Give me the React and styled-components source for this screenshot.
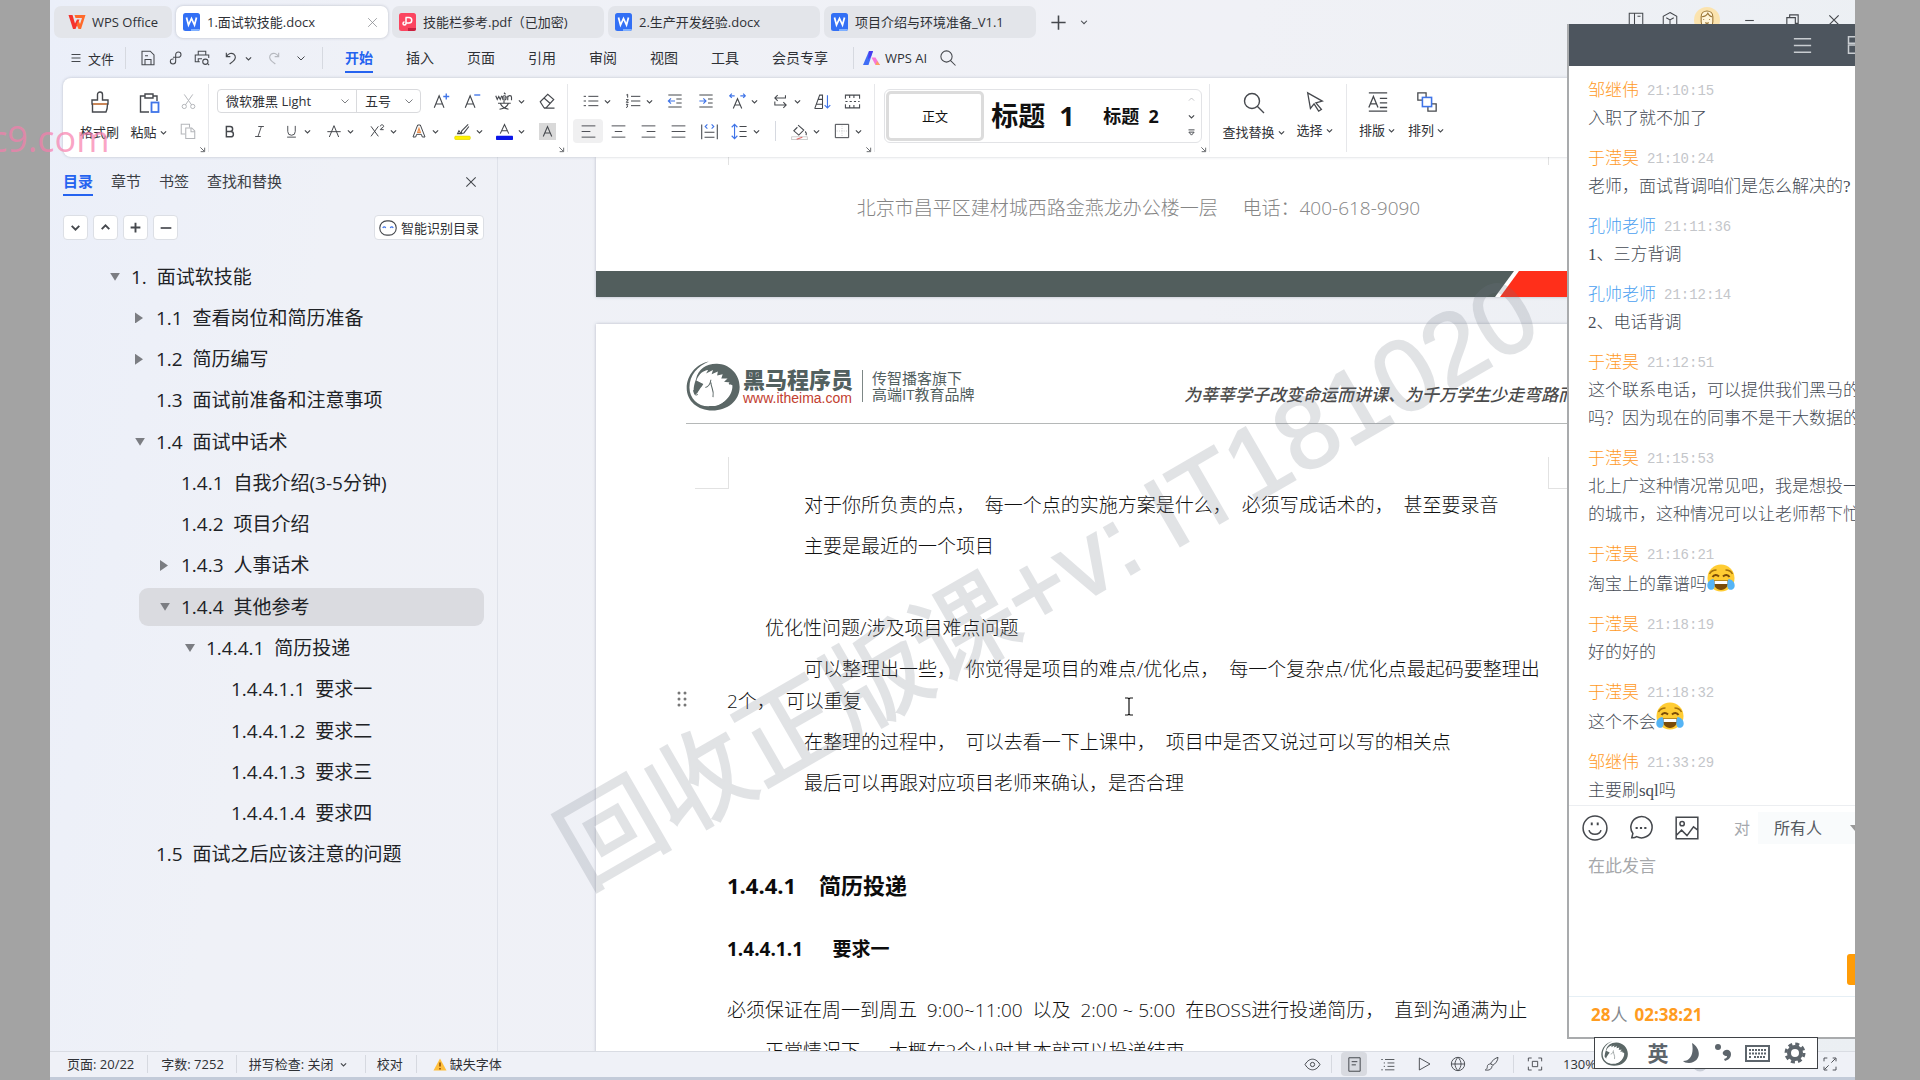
import React from "react";
import styled, { createGlobalStyle, css } from "styled-components";

const UI = '"Open Sans", "Noto Sans CJK SC", sans-serif';

const Global = createGlobalStyle`
  * { box-sizing: border-box; }
  body { margin: 0; background: #a3a3a3; font-family: ${UI}; color: #2f3136; }
  button, select, textarea, input { font: inherit; color: inherit; margin: 0; padding: 0; border: 0; background: none; }
  h2, h3, p, ul { margin: 0; padding: 0; }
`;

/* ---------- icons ---------- */

const Svg = styled.svg`
  display: block;
  flex: none;
  fill: none;
  stroke: ${(p) => p.$color || "#45484d"};
  stroke-width: ${(p) => p.$stroke || 1.4};
`;

const BLUE = "#3f74e8";

const shapes = {
  menu: <path d="M3 5h18M3 12h18M3 19h18" />,
  save: <path d="M4 3h11l5 5v13H4zM8 21v-7h8v7M8 9h4" />,
  share: <path d="M10 13.5C7 13 5 14.5 5 17s2 4 4 4 4-1.500 4-4V7c0-2 1.500-4 4-4s4 2 4 4-2 4-4 4H9" />,
  print: <path d="M7 8V3h10v5M9 17H3V8h18v4M7 17v-4h5M21.500 21.500l-2.500-2.500M20 17a3.500 3.500 0 1 1-7 0a3.500 3.500 0 0 1 7 0z" />,
  undo: <path d="M5 4v6h6M5 10c3-5 8-6 11-4 4 3 3 8-1 11l-5 4" />,
  redo: <path d="M19 4v6h-6M19 10c-3-5-8-6-11-4-4 3-3 8 1 11l5 4" />,
  chevron: <path d="M5 9l7 7 7-7" />,
  chevronUp: <path d="M5 15l7-7 7 7" />,
  search: <path d="M17.500 10a7.500 7.500 0 1 1-15 0a7.500 7.500 0 0 1 15 0zM15.500 15.500L22 22" />,
  plus: <path d="M12 3v18M3 12h18" />,
  minus: <path d="M4 12h16" />,
  close: <path d="M4 4l16 16M20 4L4 20" />,
  brush: (
    <>
      <path d="M9.500 9V3.500a2.500 2.500 0 0 1 5 0V9H20v4H4V9zM4.500 13v8H18c1-2 1.500-5 1.500-8" />
      <path d="M5 13h14" stroke="#ee8f4b" />
    </>
  ),
  paste: (
    <>
      <path d="M8 5H3.500v16H12M16 5h4v5M8 3h8v4H8z" />
      <rect x="14.500" y="11.500" width="7" height="9.500" stroke={BLUE} strokeWidth="1.800" />
    </>
  ),
  cut: <path d="M6 2l10.500 15M18 2L7.500 17M9 19a3 3 0 1 1-6 0a3 3 0 0 1 6 0zM21 19a3 3 0 1 1-6 0a3 3 0 0 1 6 0z" />,
  copy: <path d="M14 7V3H3v13h5M9 8h8l4 4v10H9zM16 8v5h5" />,
  growA: (
    <>
      <path d="M3 21L9.500 5 16 21M5 16h9" />
      <path d="M19 2v8M15 6h8" stroke={BLUE} strokeWidth="1.800" />
    </>
  ),
  shrinkA: (
    <>
      <path d="M3 21L9.500 5 16 21M5 16h9" />
      <path d="M15 4h8" stroke={BLUE} strokeWidth="1.800" />
    </>
  ),
  pinyin: <path d="M1 5l2 5L5 6l2 4 2-5M10 8h5c0-4-5-4-5 0s4 3 5 1M17 5v6M17 7c1-3 5-3 5 0v4M12 1l2 2M4 15h17M12 12v3M7 15c2 5 6 7 11 8M18 15c-2 5-6 7-12 8" />,
  eraser: <path d="M3 13L13 3l8 7-10 11H8zM8 8l8 7M8 21.500h14" />,
  bold: <path d="M7 4h6a4 4 0 0 1 0 8H7zM7 12h7a4.200 4.200 0 0 1 0 8.500H7z" strokeWidth="2.300" />,
  italic: <path d="M10 4h9M5 20h9M15 4L9.500 20" />,
  underline: <path d="M6 3v9a6 6 0 0 0 12 0V3M5 21h14" />,
  strike: <path d="M5 21l7-17 7 17M2 13h20" />,
  superscript: (
    <>
      <path d="M3 5l11 15M14 5L3 20" />
      <path d="M17 5c0-3 5-3 5 0 0 2-5 3-5 5h5" />
    </>
  ),
  outlineA: (
    <>
      <path d="M3 21L10 3h4l7 18h-4l-1.500-4h-7L7 21z" />
      <path d="M10 14l2-6 2 6z" stroke="#ee8f4b" strokeWidth="1.800" />
    </>
  ),
  highlight: (
    <>
      <path d="M20 2l-9 9-1 4 4-1 7-9M5 15h5l-3-4z" />
      <rect x="1" y="18.500" width="22" height="5" rx="1.500" fill="#fff200" stroke="#d9ce00" strokeWidth="0.800" />
    </>
  ),
  fontColor: (
    <>
      <path d="M6 15l6-13 6 13M8 11h8" />
      <rect x="0" y="18" width="24" height="6" rx="1" fill="#0b16e8" stroke="none" />
    </>
  ),
  shadeA: (
    <>
      <rect x="0" y="0" width="24" height="24" fill="#d9d9d9" stroke="none" />
      <path d="M6 19l6-14 6 14M8 14h8" />
    </>
  ),
  bullets: <path d="M8 5h15M8 12h15M8 19h15M1 5h3.500M1 12h3.500M1 19h3.500" />,
  numbers: <path d="M9 5h14M9 12h14M9 19h14M2 3l2-1v5M1.500 10h3.500l-3 4h3.500M1.500 17h3l-1.500 2 1.500 1-3 2" />,
  outdent: (
    <>
      <path d="M2 3h20M14 9h8M14 15h8M2 21h20" />
      <path d="M12 12H2M6 8l-4 4 4 4" stroke={BLUE} strokeWidth="1.700" />
    </>
  ),
  indent: (
    <>
      <path d="M2 3h20M15 9h7M15 15h7M2 21h20" />
      <path d="M2 12h10M8 8l4 4-4 4" stroke={BLUE} strokeWidth="1.700" />
    </>
  ),
  scaleA: (
    <>
      <path d="M6 22l6-14 6 14M8 17h8" />
      <path d="M1 4h7M4 1L1 4l3 3M23 4h-7M20 1l3 3-3 3" stroke={BLUE} strokeWidth="1.600" />
    </>
  ),
  direction: <path d="M19 3v4H4M8 3L4 7l4 4M4 12v5h16M16 13l4 4-4 4" />,
  sortA: (
    <>
      <path d="M1 22L8 3h4v19M3 16h9M6 9h6M1 22h11" />
      <path d="M19 3v18M15 17l4 4 4-4" stroke={BLUE} strokeWidth="1.600" />
    </>
  ),
  frame: <path d="M2 8V3h20v5M2 16v5h20v-5M2 12h3M8 12h3M14 12h3M20 12h2M8 3v4M14 3v4M8 17v4M14 17v4" />,
  alignLeft: <path d="M1 3h22M1 12h14M1 21h22" />,
  alignCenter: <path d="M1 3h22M6 12h12M1 21h22" />,
  alignRight: <path d="M1 3h22M9 12h14M1 21h22" />,
  justify: <path d="M1 3h22M1 12h22M1 21h22" />,
  distribute: (
    <>
      <path d="M1 2v21M23 2v21M5 13h14M5 20h14" />
      <path d="M9 2L6 5l3 3M15 2l3 3-3 3" stroke={BLUE} strokeWidth="1.600" />
    </>
  ),
  lineSpace: (
    <>
      <path d="M12 5h10M12 12h10M12 19h10" />
      <path d="M5 2v20M1 6l4-4 4 4M1 18l4 4 4-4" stroke={BLUE} strokeWidth="1.600" />
    </>
  ),
  bucket: (
    <>
      <path d="M10 3l8 7-7 7-7-6 5-5M20 12c2 2 2 4 1 5" />
      <rect x="1" y="19.500" width="22" height="4" stroke="#bbb" strokeWidth="1" />
      <path d="M8 23l8-3" stroke="#e06666" />
    </>
  ),
  border: (
    <>
      <path d="M2 2h20v20H2z" />
      <path d="M12 4v16M4 12h16" stroke="#b5b7bb" strokeDasharray="1.500 2" strokeWidth="1" />
    </>
  ),
  launcher: <path d="M7 7l11 11M20 8v12H8" strokeWidth="2.400" />,
  gallery: <path d="M4 5h16M5 11l7 8 7-8z" strokeWidth="2.600" />,
  select: <path d="M4 2l16 9-7 2 6 7-3 2-5-8-4 5z" />,
  layoutA: <path d="M2 2h20M2 22h20M2 18l5-12 5 12M4 14h6M14 8h8M14 13h8M14 18h8" />,
  arrange: (
    <>
      <path d="M7 10H2V2h9v5M17 14h5v8h-9v-5" />
      <rect x="7" y="7" width="10" height="10" stroke={BLUE} strokeWidth="1.700" />
    </>
  ),
  sidebar: <path d="M3 3h18v18H3zM10 3v18M14 7h4" />,
  cube: <path d="M12 2l9 5v11l-9 5-9-5V7zM7 9l5 3 5-3M12 12v6" />,
  restore: <path d="M4 8h12v12H4zM8 8V4h12v12h-4" />,
  eye: <path d="M1.500 12C5 6 9 4.500 12 4.500S19 6 22.500 12C19 18 15 19.500 12 19.500S5 18 1.500 12zM15 12a3 3 0 1 1-6 0a3 3 0 0 1 6 0z" />,
  page: <path d="M4 2.500h16v19H4zM8 8h8M8 12.500h6" />,
  list: <path d="M8 4h15M12 9.500h11M12 15h11M8 20.500h15M2 4h2.500M6 9.500h2M6 15h2M2 20.500h2.500" />,
  play: <path d="M5 3l16 9-16 9z" />,
  globe: <path d="M22 12a10 10 0 1 1-20 0a10 10 0 0 1 20 0zM2 12h20M12 2c-6 6-6 14 0 20c6-6 6-14 0-20z" />,
  pen: <path d="M21 2c-4 1-9 5-11 9l3 3c4-2 8-7 8-12zM10 12c-3 0-5 1-5 4 0 2-1 4-3 5 5 1 10-1 10-6M13 14l-3-3" />,
  fit: <path d="M2 8V3h5M17 3h5v5M22 16v5h-5M7 21H2v-5M8 8h8v8H8z" />,
  full: <path d="M3 8V3h5M16 3h5v5M21 16v5h-5M8 21H3v-5M14 10l6-6M10 14l-6 6" />,
  smile: (
    <>
      <circle cx="12" cy="12" r="11" />
      <path d="M6.500 14c1 5 10 5 11 0" />
      <path d="M9 7v2.500M14.500 7v2.500" strokeWidth="1.800" />
    </>
  ),
  bubble: (
    <>
      <path d="M3.500 21l1-4A9.800 9.800 0 1 1 8 20c-1.500 1-3 1.200-4.500 1z" />
      <path d="M7 12h2M11 12h2M15 12h2" strokeWidth="2" />
    </>
  ),
  image: <path d="M2 2h20v20H2zM9.500 8a2 2 0 1 1-4 0a2 2 0 0 1 4 0zM2 19l5-5 5 5 6-8 4 3" />,
  grid: <path d="M3 2h18v8H3zM3 12h18v10H3z" />,
  face: (
    <>
      <rect x="1" y="2.500" width="22" height="19" rx="9.500" />
      <path d="M5 12c1-2 3-2 4 0M15 12c1-2 3-2 4 0" stroke={BLUE} />
    </>
  ),
};

const Icon = ({ name, size = 18, color, stroke }) => (
  <Svg width={size} height={size} viewBox="0 0 24 24" $color={color} $stroke={stroke} aria-hidden="true">
    {shapes[name]}
  </Svg>
);

const WpsLogo = () => (
  <svg width="18" height="16" viewBox="0 0 36 32" aria-hidden="true">
    <path d="M1 2h8l5 17 4-8h5l-8 19h-5z" fill="#f5322d" />
    <path d="M13 2h22l-9 28h-5l-4-9 4-8 3 7 4-12H15z" fill="#ff6a2b" />
  </svg>
);

const DocBadge = ({ pdf }) => (
  <svg width="17" height="18" viewBox="0 0 34 36" aria-hidden="true">
    <rect width="34" height="36" rx="5" fill={pdf ? "#fb4560" : "#3370f5"} />
    <path d={pdf ? "M18 30h16v1a5 5 0 0 1-5 5H18z" : "M16 32h18a5 5 0 0 1-5 4H16z"} fill={pdf ? "#c9203f" : "#7fb0ff"} />
    {pdf ? (
      <path d="M13 9h7a5 5 0 0 1 0 11h-7M14 9v12a3 3 0 1 1-3-3" fill="none" stroke="#fff" strokeWidth="3" />
    ) : (
      <path d="M7 9l4 15 6-13 6 13 4-15" fill="none" stroke="#fff" strokeWidth="3.500" />
    )}
  </svg>
);

const AiLogo = () => (
  <svg width="17" height="14" viewBox="0 0 34 28" aria-hidden="true">
    <path d="M12 0h8l-9 28H0z" fill="#3f6df5" />
    <path d="M12 0h8l-4 11-6 6z" fill="#4b3bf0" />
    <path d="M17 13h8l9 15h-9z" fill="#f878d8" />
    <path d="M28 20l6 8h-9z" fill="#fba25f" />
  </svg>
);

const HorseLogo = ({ size = 54 }) => (
  <svg width={size} height={size - 4} viewBox="0 0 156 144" aria-hidden="true">
    <path
      d="M66 1C30 8 2 40 2 78c0 38 32 65 74 65 44 0 79-28 79-68C155 36 124 9 90 8 60 7 34 24 29 52c-5 13-7 24-7 34 2 10 4 14 12 12 6-8 14-13 24-20l10-16c4 18 12 24 10 44l14-30c8-14 6-20 18-24l-6 20 18-10c2 10 8 4 12 8 2 30-28 60-62 60C38 134 10 110 10 76 10 40 34 14 66 1z"
      fill="#5b6766"
    />
    <path d="M30 56c8-20 20-28 34-30l-6 10 20-10-4 12 18-8-2 12 16-4-4 12 18 0-10 10 16 2-10 10 12 4c0 34-28 56-60 54C40 128 14 108 14 80l6 18 12-4c10-18 14-20 18-28" fill="#fff" />
    <path d="M22 84c2 14 6 16 12 12M56 76c10-2 14-10 16-22M72 62c0 16 10 20 6 42" fill="none" stroke="#5b6766" strokeWidth="3" />
  </svg>
);

const Joy = styled((props) => (
  <svg {...props} width="28" height="28" viewBox="0 0 56 56" role="img" aria-label="笑哭">
    <circle cx="28" cy="28" r="27" fill="#ffcc33" />
    <path d="M5 20c3-6 8-8 14-8M37 12c6 0 11 2 14 8" fill="none" stroke="#a5720b" strokeWidth="3" />
    <path d="M11 26c3-5 9-5 13-1M32 25c4-4 10-4 13 1" fill="none" stroke="#7a4b08" strokeWidth="4" />
    <path d="M13 33h30c0 12-6 19-15 19s-15-7-15-19z" fill="#7a4b08" />
    <path d="M15 34h26v6H15z" fill="#fff" />
    <path d="M13 30C5 31-1 38 1 46c2 7 12 8 14 0 1-5 0-11-2-16zM43 30c8 1 14 8 12 16-2 7-12 8-14 0-1-5 0-11 2-16z" fill="#55b4f5" />
  </svg>
))`
  margin: -4px 0 7px;
`;

/* ---------- shell ---------- */

const Stage = styled.div`
  position: relative;
  display: flex;
  height: 100vh;
  padding: 0 65px 0 50px;
  overflow: hidden;
  background: #a3a3a3;
`;

const Desktop = styled.div`
  position: relative;
  flex: 1;
  min-width: 0;
  display: flex;
  flex-direction: column;
  overflow: hidden;
  background: linear-gradient(100deg, #ebeff9 0, #eff1f7 16%, #f0f1f6 60%, #ebeff3 100%);
`;

const Row = styled.div`
  display: flex;
  align-items: center;
`;

/* ---------- title bar ---------- */

const TitleBar = styled.header`
  display: flex;
  flex: none;
  gap: 4px;
  height: 38px;
  padding: 6px 0 0 4px;
`;

const FileTab = styled.button`
  display: flex;
  flex: none;
  align-items: center;
  gap: ${(p) => (p.$home ? 6 : 7)}px;
  width: ${(p) => (p.$home ? 118 : 212)}px;
  height: 32px;
  padding: 0 ${(p) => (p.$home ? 14 : 9)}px 0 ${(p) => (p.$home ? 14 : 7)}px;
  border-radius: 7px;
  background: ${(p) => (p.$active ? "#fff" : "#e3e5ea")};
  box-shadow: ${(p) => (p.$active ? "0 0 3px rgba(60, 70, 90, 0.3)" : "none")};
  font-size: 13px;
  line-height: 20px;
  white-space: nowrap;
  svg:last-child:not(:first-child) { margin-left: auto; }
`;

const TabAction = styled.button`
  display: flex;
  align-items: center;
  justify-content: center;
  width: ${(p) => p.$w}px;
`;

const WindowControls = styled.div`
  display: flex;
  height: 28px;
  margin-left: auto;
`;

const Avatar = styled.span`
  display: grid;
  place-items: center;
  width: 26px;
  height: 26px;
  border-radius: 50%;
  background: #fbe3ae;
`;

/* ---------- menu ---------- */

const MenuBar = styled.nav`
  display: flex;
  flex: none;
  align-items: center;
  height: 40px;
  padding-left: 20px;
  white-space: nowrap;
`;

const FileMenu = styled.button`
  display: flex;
  align-items: center;
  gap: 6px;
  margin-right: 11px;
  font-size: 13px;
`;

const Divider = styled.span`
  flex: none;
  width: 1px;
  height: ${(p) => p.$h || 18}px;
  margin: 0 ${(p) => p.$m || 0}px;
  background: #d6d9e0;
`;

const Tool = styled.button`
  display: flex;
  flex: none;
  align-items: center;
  justify-content: center;
  width: ${(p) => p.$w || 28}px;
  height: 24px;
`;

const MenuTabs = styled.div`
  display: flex;
  gap: 33px;
  margin: 0 25px 0 11px;
`;

const MenuTab = styled.button`
  padding: 5px 0 3px;
  border-bottom: 2px solid ${(p) => (p.$active ? "#2563f0" : "transparent")};
  color: ${(p) => (p.$active ? "#2563f0" : "inherit")};
  font-size: 14px;
  font-weight: ${(p) => (p.$active ? 700 : 400)};
  line-height: 20px;
`;

const AiButton = styled.button`
  display: flex;
  align-items: center;
  gap: 5px;
  margin: 0 12px 0 9px;
  font-size: 13px;
`;

/* ---------- ribbon ---------- */

const Ribbon = styled.section`
  position: relative;
  z-index: 1;
  display: flex;
  flex: none;
  height: 79px;
  margin-left: 13px;
  border-radius: 8px 0 0 8px;
  background: #fff;
  box-shadow: 0 0 3px rgba(70, 80, 100, 0.3);
`;

const Group = styled.div`
  position: relative;
  display: flex;
  flex: none;
  width: ${(p) => p.$w}px;
  padding: 8px ${(p) => p.$pr || 0}px 0 ${(p) => p.$pl || 0}px;
  &::after {
    content: "";
    position: absolute;
    top: 6px;
    right: 0;
    width: 1px;
    height: 68px;
    background: ${(p) => (p.$last ? "transparent" : "#e6e7ea")};
  }
`;

const Launcher = styled.button`
  position: absolute;
  right: 3px;
  bottom: 4px;
`;

const Stack = styled.div`
  flex: 1;
  min-width: 0;
`;

const Line = styled.div`
  display: flex;
  align-items: center;
  justify-content: space-between;
  height: 30px;
  padding-left: ${(p) => p.$pl || 0}px;
`;

const Cell = styled.button`
  display: flex;
  flex: none;
  align-items: center;
  justify-content: center;
  gap: 4px;
  width: ${(p) => (p.$split ? 42 : 30)}px;
  height: 24px;
  padding-left: ${(p) => (p.$split ? 2 : 0)}px;
  border-radius: 4px;
  background: ${(p) => (p.$on ? "#f0f0f1" : "none")};
`;

const BigButton = styled.button`
  display: flex;
  flex: none;
  flex-direction: column;
  align-items: center;
  width: ${(p) => p.$w}px;
  height: 60px;
  padding-top: 5px;
  font-size: 13px;
  line-height: 20px;
  white-space: nowrap;
  span { display: flex; align-items: center; gap: 2px; margin-top: 7px; }
`;

const SmallStack = styled.div`
  display: flex;
  flex-direction: column;
  button { height: 30px; }
`;

const Combo = styled.div`
  display: flex;
  flex: none;
  height: 24px;
  margin: 0 3px 0 3px;
  border: 1px solid #d9dadd;
  border-radius: 4px;
`;

const ComboPart = styled.label`
  display: grid;
  grid-template-columns: 1fr 12px;
  align-items: center;
  width: ${(p) => p.$w}px;
  padding: 0 5px 0 8px;
  font-size: 13px;
  & + & { border-left: 1px solid #d9dadd; }
  select { width: 100%; height: 20px; line-height: 20px; appearance: none; }
`;

const Gallery = styled.div`
  display: flex;
  width: 318px;
  height: 54px;
  margin-top: 3px;
  padding: 1px;
  border: 1px solid #e2e3e6;
  border-radius: 6px;
  color: #111;
`;

const StyleItem = styled.button`
  flex: none;
  width: 98px;
  font-size: ${(p) => p.$size}px;
  font-weight: ${(p) => (p.$size > 13 ? 700 : 400)};
  line-height: 40px;
  white-space: pre;
  ${(p) => p.$on && css`border: 3px solid #dcdcdc; border-radius: 5px;`}
`;

const GalleryNav = styled.div`
  display: flex;
  flex-direction: column;
  align-items: center;
  justify-content: space-between;
  margin-left: auto;
  padding: 4px 4px;
`;

const ToolCell = ({ name, split, on, size = 18, color }) => (
  <Cell type="button" $split={split} $on={on} aria-label={name}>
    <Icon name={name} size={size} color={color} stroke={1.5} />
    {split && <Icon name="chevron" size={9} stroke={3} />}
  </Cell>
);

/* ---------- outline pane ---------- */

const Body = styled.main`
  display: flex;
  flex: 1;
  min-height: 0;
`;

const Pane = styled.aside`
  flex: none;
  width: 448px;
  padding: 9px 13px 0;
  border-right: 1px solid #dfe2ea;
`;

const PaneTabs = styled.div`
  display: flex;
  align-items: center;
  gap: 18px;
  height: 31px;
  padding-right: 6px;
  > :last-child { margin-left: auto; }
`;

const PaneTab = styled.button`
  padding: 4px 0 3px;
  border-bottom: 2px solid ${(p) => (p.$active ? "#2563f0" : "transparent")};
  color: ${(p) => (p.$active ? "#2563f0" : "#3c3f45")};
  font-size: 15px;
  font-weight: ${(p) => (p.$active ? 700 : 400)};
  line-height: 20px;
`;

const PaneTools = styled.div`
  display: flex;
  gap: 5px;
  margin: 18px 0 16px;
`;

const PaneButton = styled.button`
  display: flex;
  align-items: center;
  justify-content: center;
  gap: 4px;
  width: ${(p) => p.$w || 25}px;
  height: 25px;
  margin-left: ${(p) => (p.$w ? "auto" : 0)};
  border: 1px solid #dcdfe5;
  border-radius: 4px;
  background: #fff;
  font-size: 13px;
  line-height: 20px;
  white-space: nowrap;
`;

const Tree = styled.ul`
  display: grid;
  grid-auto-rows: 1fr;
  align-items: center;
  height: 619px;
  list-style: none;
`;

const TreeItem = styled.li`
  display: flex;
  align-items: center;
  height: 38px;
  margin-left: ${(p) => p.$level * 25 + 26}px;
  padding-left: 17px;
  border-radius: 9px;
  background: ${(p) => (p.$active ? "#dadbe0" : "none")};
  color: #202226;
  font-size: 19px;
  line-height: 28px;
  white-space: pre;
`;

const Twisty = styled.span`
  flex: none;
  width: 25px;
  &::before {
    content: "";
    display: block;
    width: ${(p) => (p.$open ? 10 : 8)}px;
    height: ${(p) => (p.$open ? 8 : 11)}px;
    margin-left: 4px;
    background: ${(p) => (p.$kind ? "#7b7d82" : "none")};
    clip-path: ${(p) => (p.$open ? "polygon(0 0, 100% 0, 50% 100%)" : "polygon(0 0, 100% 50%, 0 100%)")};
  }
`;

/* ---------- document ---------- */

const Canvas = styled.section`
  flex: 1;
  min-width: 0;
  padding-left: 98px;
  overflow: hidden;
`;

const Paper = styled.article`
  width: 1085px;
  background: #fff;
  box-shadow: 0 0 3px rgba(80, 90, 110, 0.35);
  color: #111;
`;

const CropRow = styled.div`
  display: flex;
  justify-content: space-between;
  height: ${(p) => p.$h}px;
  margin: ${(p) => p.$mt || 0}px 99px 0;
  &::before, &::after {
    content: "";
    width: 33px;
    border: solid #e2e2e2;
    border-width: 0 1px ${(p) => (p.$h > 10 ? 1 : 0)}px 0;
  }
  &::after { border-width: 0 0 ${(p) => (p.$h > 10 ? 1 : 0)}px 1px; }
`;

const PageFooter = styled.p`
  padding: 27px 0 47px;
  color: #858585;
  font-size: 19px;
  font-weight: 300;
  line-height: 32px;
  text-align: center;
  white-space: pre;
`;

const Band = styled.div`
  display: flex;
  height: 26px;
  margin-bottom: 27px;
`;

const BandDark = styled.span`
  width: 918px;
  background: #525e5d;
  clip-path: polygon(0 0, 100% 0, calc(100% - 19px) 100%, 0 100%);
`;

const BandRed = styled.span`
  flex: 1;
  margin-left: -14px;
  background: #ff2f1a;
  clip-path: polygon(19px 0, 100% 0, 100% 100%, 0 100%);
`;

const Letterhead = styled.header`
  display: flex;
  align-items: center;
  height: 100px;
  margin: 0 90px;
  padding-top: 24px;
  border-bottom: 1px solid #b5b8b8;
  color: #52605f;
  white-space: nowrap;
`;

const Brand = styled.div`
  display: flex;
  flex-direction: column;
  margin-left: 3px;
  padding: 3px 9px 0 0;
  strong { font-size: 22px; font-weight: 900; line-height: 22px; }
  a { color: #c2402f; font: 14px/16px "Liberation Sans", sans-serif; text-decoration: none; }
`;

const Slogan = styled.div`
  padding-left: 9px;
  border-left: 1px solid #7d8786;
  font-size: 15px;
  line-height: 16px;
`;

const Motto = styled.em`
  margin: 0 16px 0 auto;
  padding-top: 16px;
  color: #4a4a4a;
  font-size: 17px;
  font-weight: 500;
`;

const Content = styled.div`
  padding: 0 131px;
`;

const Para = styled.p`
  min-height: 32px;
  margin-bottom: 9px;
  padding-left: ${(p) => p.$indent || 0}px;
  font-size: 19px;
  font-weight: 300;
  line-height: 32px;
  white-space: pre;
`;

const Outdent = styled.span`
  display: block;
  margin-left: -77px;
`;

const Grip = styled.span`
  position: absolute;
  left: 627px;
  top: 690px;
`;

const Caret = styled.span`
  position: absolute;
  left: 1074px;
  top: 697px;
`;

const H2 = styled.h2`
  margin-top: 68px;
  color: #0c0c0c;
  font-size: 22px;
  line-height: 36px;
  white-space: pre;
`;

const H3 = styled.h3`
  margin: 30px 0 29px;
  color: #0c0c0c;
  font-size: 19px;
  line-height: 32px;
  white-space: pre;
`;

/* ---------- status bar ---------- */

const StatusBar = styled.footer`
  display: flex;
  flex: none;
  align-items: center;
  height: 29px;
  padding: 0 0 1px 17px;
  border-top: 1px solid #d9dce3;
  border-bottom: 3px solid #c3cbd9;
  background: #eff1f7;
  font-size: 13px;
  line-height: 20px;
  white-space: nowrap;
`;

const StatusTools = styled.div`
  display: flex;
  align-items: center;
  flex: none;
  width: 562px;
  margin-left: auto;
`;

const StatusIcon = styled.button`
  display: flex;
  flex: none;
  align-items: center;
  justify-content: center;
  width: ${(p) => p.$w || 34}px;
  height: 24px;
  margin-left: ${(p) => (p.$on ? 9 : 0)}px;
  border-radius: 4px;
  background: ${(p) => (p.$on ? "#d8dae0" : "none")};
`;

const ZoomLevel = styled.output`
  margin-left: 11px;
`;

const Zoom = styled.input`
  width: 120px;
  margin: 0 32px 0 70px;
  accent-color: #c9ced8;
`;

/* ---------- chat window ---------- */

const Chat = styled.section`
  position: absolute;
  z-index: 2;
  top: 24px;
  right: 0;
  bottom: 41px;
  display: flex;
  flex-direction: column;
  width: 288px;
  overflow: hidden;
  border: solid #a9abad;
  border-width: 0 0 2px 2px;
  background: #fff;
`;

const ChatHead = styled.header`
  display: flex;
  flex: none;
  align-items: center;
  justify-content: flex-end;
  gap: 32px;
  height: 42px;
  margin: 0 -11px 0 -2px;
  background: #4d555e;
`;

const Feed = styled.div`
  flex: 1;
  min-height: 0;
  padding: 11px 0 0 19px;
  overflow: hidden;
  color: #454b55;
  font-family: "Liberation Serif", "Noto Sans CJK SC", serif;
  font-size: 17px;
  font-weight: 300;
  line-height: 28px;
  white-space: pre;
`;

const Message = styled.div`
  margin-bottom: 12px;
`;

const Who = styled.div`
  display: flex;
  gap: 8px;
  height: 28px;
  color: ${(p) => (p.$teacher ? "#4b9ff0" : "#ff9a1e")};
  time { color: #c4c6ca; font-family: "Liberation Mono", monospace; font-size: 14px; }
`;

const EmojiLine = styled.div`
  display: flex;
  align-items: flex-end;
  height: 30px;
`;

const Composer = styled.div`
  display: flex;
  flex: none;
  flex-direction: column;
  height: 191px;
  border-top: 1px solid #eceef1;
`;

const ComposerTools = styled.div`
  display: flex;
  align-items: center;
  height: 42px;
  padding: 2px 0 0 13px;
  font-size: 16px;
  line-height: 24px;
  white-space: nowrap;
`;

const ChatTool = styled.button`
  width: 26px;
  margin-right: 20px;
`;

const Target = styled.label`
  display: flex;
  align-items: center;
  margin-left: 14px;
  color: #a5a8ad;
  select { width: 102px; height: 32px; margin-left: 8px; padding-left: 16px; background: #f9fbfc; color: #555a61; appearance: none; }
  svg { flex: none; margin-left: -10px; }
`;

const Input = styled.textarea`
  display: block;
  flex: 1;
  width: 100%;
  padding: 6px 19px;
  border: 0;
  outline: 0;
  resize: none;
  font-size: 17px;
  line-height: 24px;
  &::placeholder { color: #a6a8ab; }
`;

const Send = styled.button`
  flex: none;
  align-self: flex-end;
  width: 60px;
  height: 31px;
  margin: 0 -52px 11px 0;
  border-radius: 3px;
  background: #ff9c07;
`;

const ChatFoot = styled.footer`
  display: flex;
  flex: none;
  gap: 7px;
  height: 41px;
  padding: 7px 0 0 22px;
  border-top: 1px solid #e6eff5;
  color: #85898e;
  font-size: 17px;
  line-height: 22px;
  b { color: #ff9c1f; }
`;

const ImeBar = styled.div`
  position: absolute;
  z-index: 3;
  right: 37px;
  bottom: 11px;
  display: flex;
  align-items: center;
  justify-content: space-between;
  width: 224px;
  height: 32px;
  padding: 0 11px 0 5px;
  border: 1px solid #3f4246;
  background: #fff;
  color: #5d656c;
  b { margin-left: 5px; font-size: 21px; line-height: 28px; }
`;

/* ---------- overlays ---------- */

const Watermark = styled.div`
  position: absolute;
  z-index: 1;
  left: 1048px;
  top: 582px;
  color: #6e7682;
  opacity: 0.2;
  font: 102px/120px "Liberation Sans", "Noto Sans CJK SC", sans-serif;
  -webkit-text-stroke: 2px #6e7682;
  white-space: pre;
  transform: translate(-50%, -50%) rotate(-30deg);
`;

const SiteMark = styled.div`
  position: absolute;
  z-index: 4;
  left: -10px;
  top: 115px;
  color: rgba(248, 125, 172, 0.7);
  font-size: 36px;
  line-height: 48px;
`;

/* ---------- data ---------- */

const outline = [
  [0, "1.  面试软技能", "open"],
  [1, "1.1  查看岗位和简历准备", "shut"],
  [1, "1.2  简历编写", "shut"],
  [1, "1.3  面试前准备和注意事项"],
  [1, "1.4  面试中话术", "open"],
  [2, "1.4.1  自我介绍(3-5分钟)"],
  [2, "1.4.2  项目介绍"],
  [2, "1.4.3  人事话术", "shut"],
  [2, "1.4.4  其他参考", "open", true],
  [3, "1.4.4.1  简历投递", "open"],
  [4, "1.4.4.1.1  要求一"],
  [4, "1.4.4.1.2  要求二"],
  [4, "1.4.4.1.3  要求三"],
  [4, "1.4.4.1.4  要求四"],
  [1, "1.5  面试之后应该注意的问题"],
];

const messages = [
  ["邹继伟", "21:10:15", ["入职了就不加了"]],
  ["于滢昊", "21:10:24", ["老师，面试背调咱们是怎么解决的?"]],
  ["孔帅老师", "21:11:36", ["1、三方背调"]],
  ["孔帅老师", "21:12:14", ["2、电话背调"]],
  ["于滢昊", "21:12:51", ["这个联系电话，可以提供我们黑马的", "吗？因为现在的同事不是干大数据的"]],
  ["于滢昊", "21:15:53", ["北上广这种情况常见吧，我是想投一", "的城市，这种情况可以让老师帮下忙"]],
  ["于滢昊", "21:16:21", ["淘宝上的靠谱吗"], true],
  ["于滢昊", "21:18:19", ["好的好的"]],
  ["于滢昊", "21:18:32", ["这个不会"], true],
  ["邹继伟", "21:33:29", ["主要刷sql吗"]],
];

const menus = ["开始", "插入", "页面", "引用", "审阅", "视图", "工具", "会员专享"];

/* ---------- sections ---------- */

const Title = () => (
  <TitleBar>
    <FileTab type="button" $home><WpsLogo />WPS Office</FileTab>
    <FileTab type="button" $active><DocBadge />1.面试软技能.docx<Icon name="close" size={13} color="#85888e" /></FileTab>
    <FileTab type="button"><DocBadge pdf />技能栏参考.pdf（已加密)</FileTab>
    <FileTab type="button"><DocBadge />2.生产开发经验.docx</FileTab>
    <FileTab type="button"><DocBadge />项目介绍与环境准备_V1.1</FileTab>
    <TabAction type="button" $w={36} aria-label="新建"><Icon name="plus" size={19} stroke={2} /></TabAction>
    <TabAction type="button" $w={8} aria-label="更多标签"><Icon name="chevron" size={10} stroke={2.5} /></TabAction>
    <WindowControls>
      <TabAction type="button" $w={34} aria-label="侧栏"><Icon name="sidebar" /></TabAction>
      <TabAction type="button" $w={34} aria-label="应用"><Icon name="cube" /></TabAction>
      <TabAction type="button" $w={40} aria-label="账户">
        <Avatar>
          <svg width="20" height="20" viewBox="0 0 24 24" fill="#fff4d8" stroke="#9a7434" strokeWidth="1.300" aria-hidden="true">
            <path d="M5 8c0-9 14-9 14 0v6c0 9-14 9-14 0z" />
            <path d="M8 11v1M15 11v1M10 15c1 1 3 1 4 0M6 8c4 0 6-2 7-4 1 2 3 4 5 4" />
          </svg>
        </Avatar>
      </TabAction>
      <TabAction type="button" $w={44} aria-label="最小化"><Icon name="minus" size={13} stroke={2} /></TabAction>
      <TabAction type="button" $w={42} aria-label="还原"><Icon name="restore" size={17} stroke={1.6} /></TabAction>
      <TabAction type="button" $w={42} aria-label="关闭"><Icon name="close" size={14} stroke={2} /></TabAction>
    </WindowControls>
  </TitleBar>
);

const Menu = () => (
  <MenuBar>
    <FileMenu type="button"><Icon name="menu" size={12} stroke={2} />文件</FileMenu>
    <Divider $h={22} />
    <Tool type="button" $w={43} aria-label="保存"><Icon name="save" /></Tool>
    <Tool type="button" $w={12} aria-label="分享"><Icon name="share" size={16} stroke={1.6} /></Tool>
    <Tool type="button" $w={42} aria-label="打印预览"><Icon name="print" /></Tool>
    <Tool type="button" $w={16} aria-label="撤销"><Icon name="undo" size={16} stroke={1.7} /></Tool>
    <Tool type="button" $w={18} aria-label="撤销列表"><Icon name="chevron" size={9} stroke={3} /></Tool>
    <Tool type="button" $w={34} aria-label="恢复"><Icon name="redo" size={16} color="#b6b9bf" stroke={1.7} /></Tool>
    <Tool type="button" $w={20} aria-label="更多"><Icon name="chevron" size={12} stroke={2} /></Tool>
    <Divider $h={22} $m={11} />
    <MenuTabs>
      {menus.map((m, i) => <MenuTab type="button" key={m} $active={i === 0}>{m}</MenuTab>)}
    </MenuTabs>
    <Divider $h={22} />
    <AiButton type="button"><AiLogo />WPS AI</AiButton>
    <Tool type="button" $w={18} aria-label="搜索"><Icon name="search" /></Tool>
  </MenuBar>
);

const RibbonBar = () => (
  <Ribbon>
    <Group $w={146} $pl={12}>
      <BigButton type="button" $w={49}><Icon name="brush" size={24} /><span>格式刷</span></BigButton>
      <BigButton type="button" $w={50}><Icon name="paste" size={24} /><span>粘贴<Icon name="chevron" size={9} stroke={3} /></span></BigButton>
      <SmallStack>
        <Tool type="button" aria-label="剪切"><Icon name="cut" size={17} color="#b4b6ba" /></Tool>
        <Tool type="button" aria-label="复制"><Icon name="copy" color="#b4b6ba" /></Tool>
      </SmallStack>
      <Launcher type="button" aria-label="剪贴板"><Icon name="launcher" size={8} /></Launcher>
    </Group>
    <Group $w={359} $pl={5} $pr={6}>
      <Stack>
        <Line>
          <Combo>
            <ComboPart $w={138}>
              <select aria-label="字体"><option>微软雅黑 Light</option></select>
              <Icon name="chevron" size={12} />
            </ComboPart>
            <ComboPart $w={64}>
              <select aria-label="字号"><option>五号</option></select>
              <Icon name="chevron" size={12} />
            </ComboPart>
          </Combo>
          <ToolCell name="growA" />
          <ToolCell name="shrinkA" />
          <ToolCell name="pinyin" split />
          <ToolCell name="eraser" />
        </Line>
        <Line>
          <ToolCell name="bold" size={15} />
          <ToolCell name="italic" size={15} />
          <ToolCell name="underline" split size={15} />
          <ToolCell name="strike" split size={16} />
          <ToolCell name="superscript" split size={16} />
          <ToolCell name="outlineA" split size={16} />
          <ToolCell name="highlight" split size={17} />
          <ToolCell name="fontColor" split size={17} />
          <ToolCell name="shadeA" size={17} />
        </Line>
      </Stack>
      <Launcher type="button" aria-label="字体设置"><Icon name="launcher" size={8} /></Launcher>
    </Group>
    <Group $w={307} $pl={5} $pr={7}>
      <Stack>
        <Line $pl={2}>
          <ToolCell name="bullets" split size={16} />
          <ToolCell name="numbers" split size={16} />
          <ToolCell name="outdent" size={16} />
          <ToolCell name="indent" size={16} />
          <ToolCell name="scaleA" split size={17} />
          <ToolCell name="direction" split size={17} />
          <ToolCell name="sortA" size={17} />
          <ToolCell name="frame" size={17} />
        </Line>
        <Line>
          <ToolCell name="alignLeft" on size={15} />
          <ToolCell name="alignCenter" size={15} />
          <ToolCell name="alignRight" size={15} />
          <ToolCell name="justify" size={15} />
          <ToolCell name="distribute" size={17} />
          <ToolCell name="lineSpace" split size={17} />
          <Divider $h={20} $m={8} />
          <ToolCell name="bucket" split size={17} />
          <ToolCell name="border" split size={16} />
        </Line>
      </Stack>
      <Launcher type="button" aria-label="段落设置"><Icon name="launcher" size={8} /></Launcher>
    </Group>
    <Group $w={335} $pl={9}>
      <Gallery>
        <StyleItem type="button" $size={13} $on>正文</StyleItem>
        <StyleItem type="button" $size={27}>标题  1</StyleItem>
        <StyleItem type="button" $size={18}>标题  2</StyleItem>
        <GalleryNav>
          <Icon name="chevronUp" size={9} color="#b0b2b6" stroke={2} />
          <Icon name="chevron" size={9} stroke={3} />
          <Icon name="gallery" size={9} />
        </GalleryNav>
      </Gallery>
      <Launcher type="button" aria-label="样式设置"><Icon name="launcher" size={8} /></Launcher>
    </Group>
    <Group $w={137} $pl={9}>
      <BigButton type="button" $w={70}><Icon name="search" size={24} /><span>查找替换<Icon name="chevron" size={9} stroke={3} /></span></BigButton>
      <BigButton type="button" $w={52}><Icon name="select" size={22} /><span>选择<Icon name="chevron" size={9} stroke={3} /></span></BigButton>
    </Group>
    <Group $w={120} $pl={6} $last>
      <BigButton type="button" $w={49}><Icon name="layoutA" size={22} /><span>排版<Icon name="chevron" size={9} stroke={3} /></span></BigButton>
      <BigButton type="button" $w={49}><Icon name="arrange" size={22} /><span>排列<Icon name="chevron" size={9} stroke={3} /></span></BigButton>
    </Group>
  </Ribbon>
);

const Outline = () => (
  <Pane>
    <PaneTabs>
      {["目录", "章节", "书签", "查找和替换"].map((t, i) => <PaneTab type="button" key={t} $active={i === 0}>{t}</PaneTab>)}
      <button type="button" aria-label="关闭导航"><Icon name="close" size={14} stroke={1.8} /></button>
    </PaneTabs>
    <PaneTools>
      <PaneButton type="button" aria-label="展开"><Icon name="chevron" size={13} stroke={3.5} /></PaneButton>
      <PaneButton type="button" aria-label="收起"><Icon name="chevronUp" size={13} stroke={3.5} /></PaneButton>
      <PaneButton type="button" aria-label="增加"><Icon name="plus" size={13} stroke={3.5} /></PaneButton>
      <PaneButton type="button" aria-label="减少"><Icon name="minus" size={16} stroke={2.5} /></PaneButton>
      <PaneButton type="button" $w={110}><Icon name="face" size={18} stroke={1.5} />智能识别目录</PaneButton>
    </PaneTools>
    <Tree>
      {outline.map(([level, text, kind, active]) => (
        <TreeItem key={text} $level={level} $active={active}>
          <Twisty $kind={kind} $open={kind === "open"} />
          {text}
        </TreeItem>
      ))}
    </Tree>
  </Pane>
);

const Document = () => (
  <Canvas>
    <Paper>
      <CropRow $h={8} />
      <PageFooter>{"北京市昌平区建材城西路金燕龙办公楼一层     电话：400-618-9090"}</PageFooter>
      <Band><BandDark /><BandRed /></Band>
    </Paper>
    <Paper>
      <Letterhead>
        <HorseLogo />
        <Brand>
          <strong>黑马程序员</strong>
          <a href="#home">www.itheima.com</a>
        </Brand>
        <Slogan>传智播客旗下<br />高端IT教育品牌</Slogan>
        <Motto>为莘莘学子改变命运而讲课、为千万学生少走弯路而</Motto>
      </Letterhead>
      <CropRow $h={32} $mt={33} />
      <Content>
        <Para $indent={77}>对于你所负责的点，  每一个点的实施方案是什么，  必须写成话术的，  甚至要录音</Para>
        <Para $indent={77}>主要是最近的一个项目</Para>
        <Para />
        <Para $indent={38}>优化性问题/涉及项目难点问题</Para>
        <Para $indent={77}>
          可以整理出一些，  你觉得是项目的难点/优化点，  每一个复杂点/优化点最起码要整理出
          <Outdent>2个，  可以重复</Outdent>
        </Para>
        <Para $indent={77}>在整理的过程中，  可以去看一下上课中，  项目中是否又说过可以写的相关点</Para>
        <Para $indent={77}>最后可以再跟对应项目老师来确认，是否合理</Para>
        <H2>{"1.4.4.1    简历投递"}</H2>
        <H3>{"1.4.4.1.1      要求一"}</H3>
        <Para>{"必须保证在周一到周五  9:00~11:00  以及  2:00 ~ 5:00  在BOSS进行投递简历，  直到沟通满为止"}</Para>
        <Para $indent={38}>正常情况下，  大概在2个小时基本就可以投递结束</Para>
      </Content>
    </Paper>
  </Canvas>
);

const Status = () => (
  <StatusBar>
    <span>页面: 20/22</span>
    <Divider $m={13} />
    <span>字数: 7252</span>
    <Divider $m={12} />
    <Row>拼写检查: 关闭<Tool type="button" $w={20} aria-label="拼写选项"><Icon name="chevron" size={9} stroke={3} /></Tool></Row>
    <Divider $m={11} />
    <span>校对</span>
    <Divider $m={13} />
    <Row>
      <Tool as="span" $w={20}>
        <svg width="14" height="13" viewBox="0 0 28 26" aria-hidden="true">
          <path d="M14 1l13 24H1z" fill="#ffbf3c" />
          <path d="M14 9v8M14 20v3" stroke="#8a4b00" strokeWidth="3" />
        </svg>
      </Tool>
      缺失字体
    </Row>
    <StatusTools>
      <StatusIcon type="button" $w={38} aria-label="护眼模式"><Icon name="eye" size={17} /></StatusIcon>
      <Divider />
      <StatusIcon type="button" $w={26} $on aria-label="页面视图"><Icon name="page" size={17} /></StatusIcon>
      <StatusIcon type="button" $w={40} aria-label="大纲"><Icon name="list" size={15} /></StatusIcon>
      <StatusIcon type="button" aria-label="阅读"><Icon name="play" size={16} /></StatusIcon>
      <StatusIcon type="button" aria-label="网页"><Icon name="globe" size={16} /></StatusIcon>
      <StatusIcon type="button" aria-label="写作"><Icon name="pen" size={16} /></StatusIcon>
      <Divider $m={4} />
      <StatusIcon type="button" aria-label="适应"><Icon name="fit" size={16} /></StatusIcon>
      <ZoomLevel>130%</ZoomLevel>
      <Zoom type="range" min="10" max="500" defaultValue="130" aria-label="缩放" />
      <StatusIcon type="button" $w={24} aria-label="全屏"><Icon name="full" size={16} /></StatusIcon>
    </StatusTools>
  </StatusBar>
);

const ChatWindow = () => (
  <Chat>
    <ChatHead>
      <Icon name="menu" size={23} color="#c9cdd1" stroke={1.5} />
      <Icon name="grid" size={20} color="#c9cdd1" stroke={1.8} />
    </ChatHead>
    <Feed>
      {messages.map(([who, time, lines, joy]) => (
        <Message key={time}>
          <Who $teacher={who === "孔帅老师"}>{who}<time>{time}</time></Who>
          {joy ? <EmojiLine>{lines[0]}<Joy /></EmojiLine> : lines.map((l) => <div key={l}>{l}</div>)}
        </Message>
      ))}
    </Feed>
    <Composer>
      <ComposerTools>
        <ChatTool type="button" aria-label="表情"><Icon name="smile" size={26} /></ChatTool>
        <ChatTool type="button" aria-label="常用语"><Icon name="bubble" size={26} /></ChatTool>
        <ChatTool type="button" aria-label="图片"><Icon name="image" size={26} /></ChatTool>
        <Target>
          对
          <select><option>所有人</option></select>
          <svg width="10" height="6" viewBox="0 0 10 6" aria-hidden="true"><path d="M0 0h10L5 6z" fill="#999" /></svg>
        </Target>
      </ComposerTools>
      <Input placeholder="在此发言" aria-label="在此发言" />
      <Send type="button" aria-label="发送" />
    </Composer>
    <ChatFoot><span><b>28</b>人</span><b>02:38:21</b></ChatFoot>
  </Chat>
);

const Ime = () => (
  <ImeBar>
    <HorseLogo size={29} />
    <b>英</b>
    <svg width="18" height="22" viewBox="0 0 18 22" fill="#5d656c" aria-hidden="true"><path d="M10 1c10 6 9 19-3 20-3 0-5-1-6-2 8 0 11-8 9-18z" /></svg>
    <svg width="18" height="20" viewBox="0 0 18 20" fill="#5d656c" aria-hidden="true"><circle cx="4" cy="4" r="3" /><path d="M9 9c3-4 8-2 8 2 0 4-3 6-6 7l-1-2c2-1 3-1 3-3-3 0-5-2-4-4z" /></svg>
    <svg width="25" height="17" viewBox="0 0 25 17" aria-hidden="true">
      <rect x="1" y="1" width="23" height="15" fill="#fff" stroke="#5d656c" strokeWidth="2" />
      <path d="M4 5h17M4 8.500h17M4 12h3M9 12h8M18 12h3" stroke="#5d656c" strokeWidth="2" strokeDasharray="2 1" />
    </svg>
    <svg width="22" height="22" viewBox="0 0 22 22" fill="none" stroke="#5d656c" aria-hidden="true">
      <circle cx="11" cy="11" r="6" strokeWidth="4" />
      <circle cx="11" cy="11" r="9" strokeWidth="3" strokeDasharray="4 3.070" />
    </svg>
  </ImeBar>
);

export default function App() {
  return (
    <>
      <Global />
      <Stage>
        <Desktop>
          <Title />
          <Menu />
          <RibbonBar />
          <Body>
            <Outline />
            <Document />
          </Body>
          <Status />
          <Grip>
            <svg width="10" height="16" viewBox="0 0 10 16" fill="#777" aria-hidden="true">
              {[2, 8, 14].map((y) => <g key={y}><circle cx="2" cy={y} r="1.500" /><circle cx="8" cy={y} r="1.500" /></g>)}
            </svg>
          </Grip>
          <Caret>
            <svg width="10" height="19" viewBox="0 0 10 19" fill="none" stroke="#111" aria-hidden="true">
              <path d="M1 1h3l1 1 1-1h3M5 2v15M1 18h3l1-1 1 1h3" strokeWidth="1.200" />
            </svg>
          </Caret>
          <ChatWindow />
          <Ime />
        </Desktop>
        <Watermark>回收正版课+v: IT181020</Watermark>
        <SiteMark>c9.com</SiteMark>
      </Stage>
    </>
  );
}
